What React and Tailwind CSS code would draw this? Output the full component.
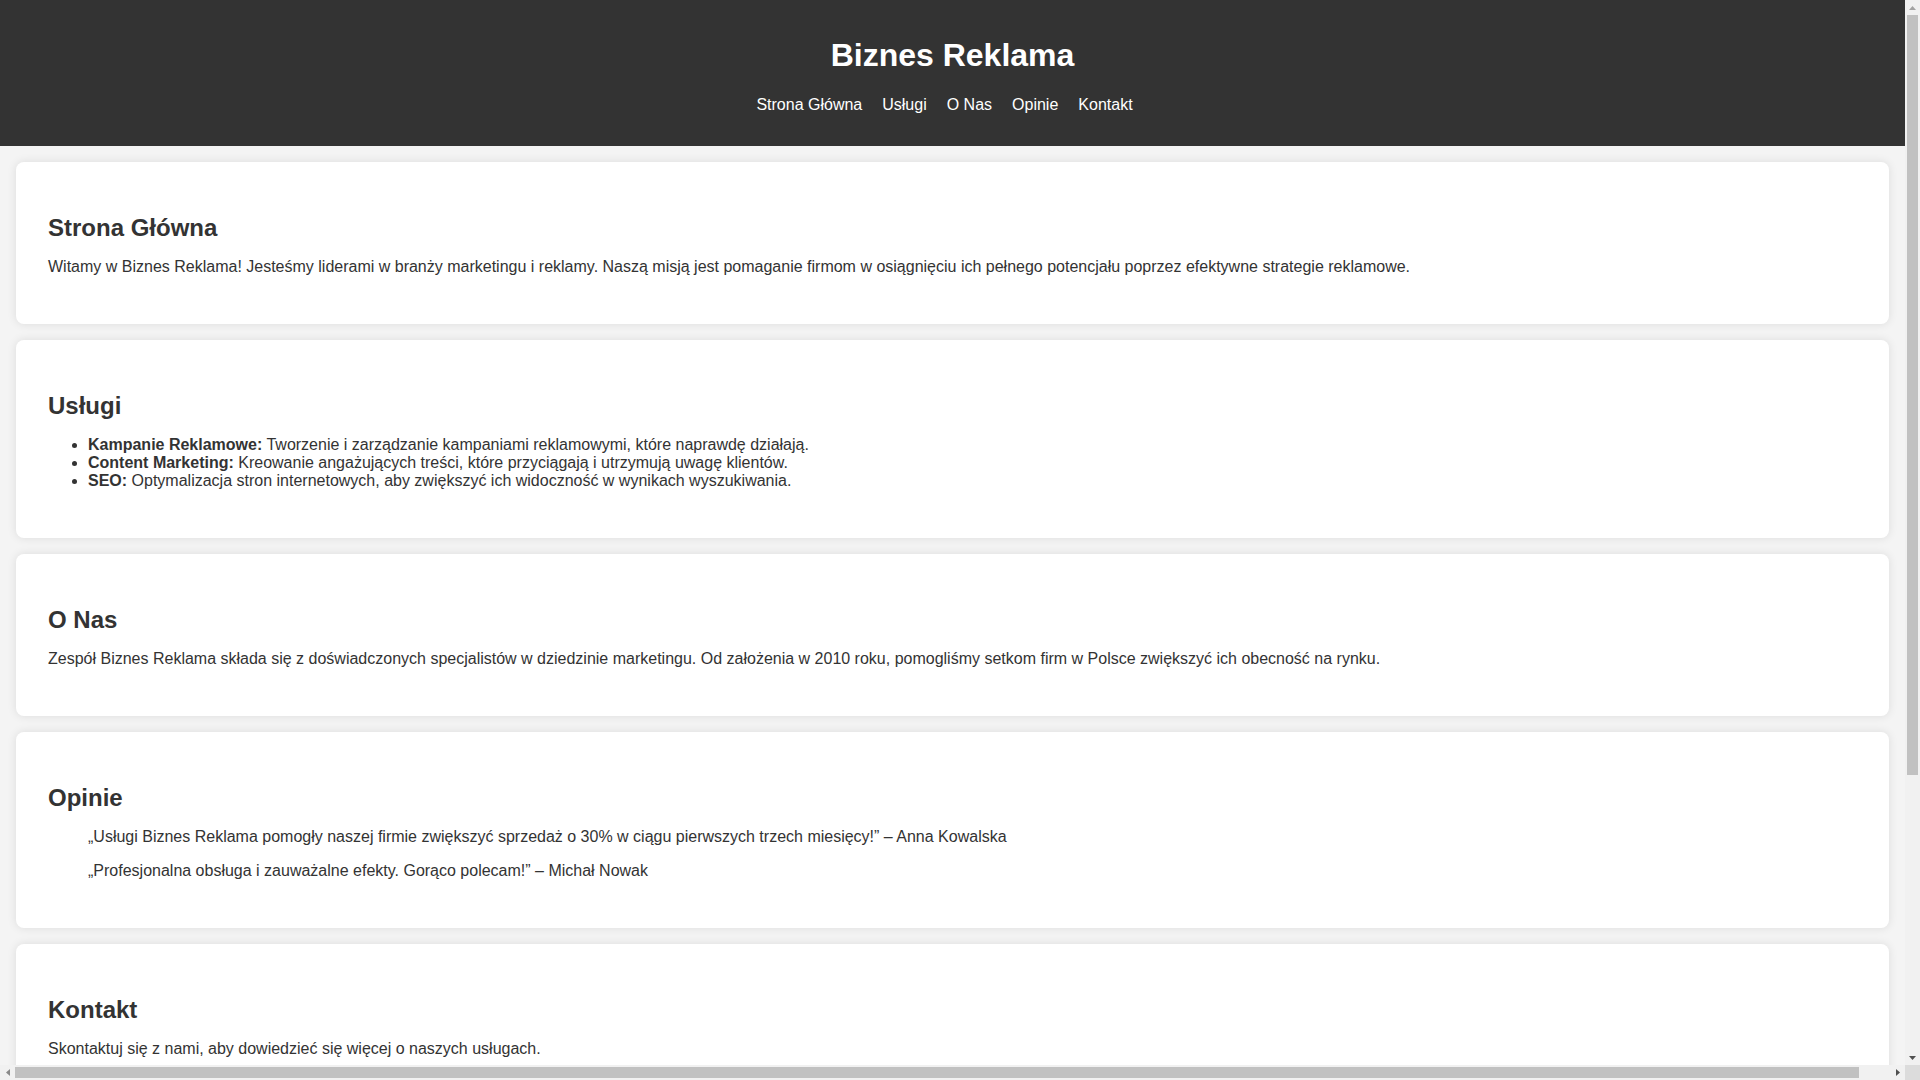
const navLinks = ['Strona Główna', 'Usługi', 'O Nas', 'Opinie', 'Kontakt']

const services = [
  { title: 'Kampanie Reklamowe:', text: 'Tworzenie i zarządzanie kampaniami reklamowymi, które naprawdę działają.' },
  { title: 'Content Marketing:', text: 'Kreowanie angażujących treści, które przyciągają i utrzymują uwagę klientów.' },
  { title: 'SEO:', text: 'Optymalizacja stron internetowych, aby zwiększyć ich widoczność w wynikach wyszukiwania.' },
]

const opinions = [
  '„Usługi Biznes Reklama pomogły naszej firmie zwiększyć sprzedaż o 30% w ciągu pierwszych trzech miesięcy!” – Anna Kowalska',
  '„Profesjonalna obsługa i zauważalne efekty. Gorąco polecam!” – Michał Nowak',
]

function Section({ title, children }) {
  return (
    <section className="rounded-lg bg-white p-8 shadow-[0_0_10px_rgba(0,0,0,0.1)]">
      <h2 className="mt-5 mb-4 text-2xl leading-[normal] font-bold">{title}</h2>
      {children}
    </section>
  )
}

// small arrow glyph for the scrollbar buttons
function Arrow({ dir, color }) {
  const points = {
    up: '3.5,0 7,4 0,4',
    down: '0,0 7,0 3.5,4',
    left: '0,3.5 4,0 4,7',
    right: '0,0 4,3.5 0,7',
  }[dir]
  const vertical = dir === 'up' || dir === 'down'
  return (
    <svg width={vertical ? 7 : 4} height={vertical ? 4 : 7} viewBox={vertical ? '0 0 7 4' : '0 0 4 7'}>
      <polygon points={points} fill={color} />
    </svg>
  )
}

function Page() {
  return (
    <div className="bg-[#f4f4f4] font-['Liberation_Sans',Arial,sans-serif] text-base leading-[normal] text-[#333]">
      <header className="bg-[#333] py-4 text-center text-white">
        <h1 className="mt-[21.44px] text-[32px] leading-[normal] font-bold">Biznes Reklama</h1>
        <nav className="mt-[21.44px] mb-4">
          <ul className="flex justify-center gap-5 pr-4">
            {navLinks.map((link) => (
              <li key={link}>
                <a href={`#${link}`} className="text-white">{link}</a>
              </li>
            ))}
          </ul>
        </nav>
      </header>

      <main className="flex flex-col gap-4 p-4">
        <Section title="Strona Główna">
          <p className="mb-4">
            Witamy w Biznes Reklama! Jesteśmy liderami w branży marketingu i reklamy. Naszą misją jest pomaganie firmom w osiągnięciu ich pełnego potencjału poprzez efektywne strategie reklamowe.
          </p>
        </Section>

        <Section title="Usługi">
          <ul className="mb-4 list-disc pl-10">
            {services.map((s) => (
              <li key={s.title}>
                <strong>{s.title}</strong> {s.text}
              </li>
            ))}
          </ul>
        </Section>

        <Section title="O Nas">
          <p className="mb-4">
            Zespół Biznes Reklama składa się z doświadczonych specjalistów w dziedzinie marketingu. Od założenia w 2010 roku, pomogliśmy setkom firm w Polsce zwiększyć ich obecność na rynku.
          </p>
        </Section>

        <Section title="Opinie">
          <div className="mb-4 flex flex-col gap-4">
            {opinions.map((o) => (
              <blockquote key={o} className="mx-10">{o}</blockquote>
            ))}
          </div>
        </Section>

        <Section title="Kontakt">
          <p className="mb-4">Skontaktuj się z nami, aby dowiedzieć się więcej o naszych usługach.</p>
        </Section>
      </main>
    </div>
  )
}

export default function App() {
  return (
    <div className="flex h-screen flex-col overflow-hidden bg-[#f4f4f4]">
      <div className="flex min-h-0 flex-1">
        <div className="min-w-0 flex-1 overflow-hidden">
          <Page />
        </div>
        <div className="flex w-[15px] flex-col bg-[#f1f1f1]">
          <div className="flex h-[15px] items-center justify-center">
            <Arrow dir="up" color="#a3a3a3" />
          </div>
          <div className="flex-1 px-[2px]">
            <div className="h-[760px] bg-[#c1c1c1]" />
          </div>
          <div className="flex h-[15px] items-center justify-center">
            <Arrow dir="down" color="#505050" />
          </div>
        </div>
      </div>
      <div className="flex h-[15px] bg-[#f1f1f1]">
        <div className="flex w-[15px] items-center justify-center">
          <Arrow dir="left" color="#8a8a8a" />
        </div>
        <div className="flex-1 py-[2px]">
          <div className="h-full w-[1844px] bg-[#c1c1c1]" />
        </div>
        <div className="flex w-[15px] items-center justify-center">
          <Arrow dir="right" color="#505050" />
        </div>
        <div className="w-[15px] bg-[#dcdcdc]" />
      </div>
    </div>
  )
}
